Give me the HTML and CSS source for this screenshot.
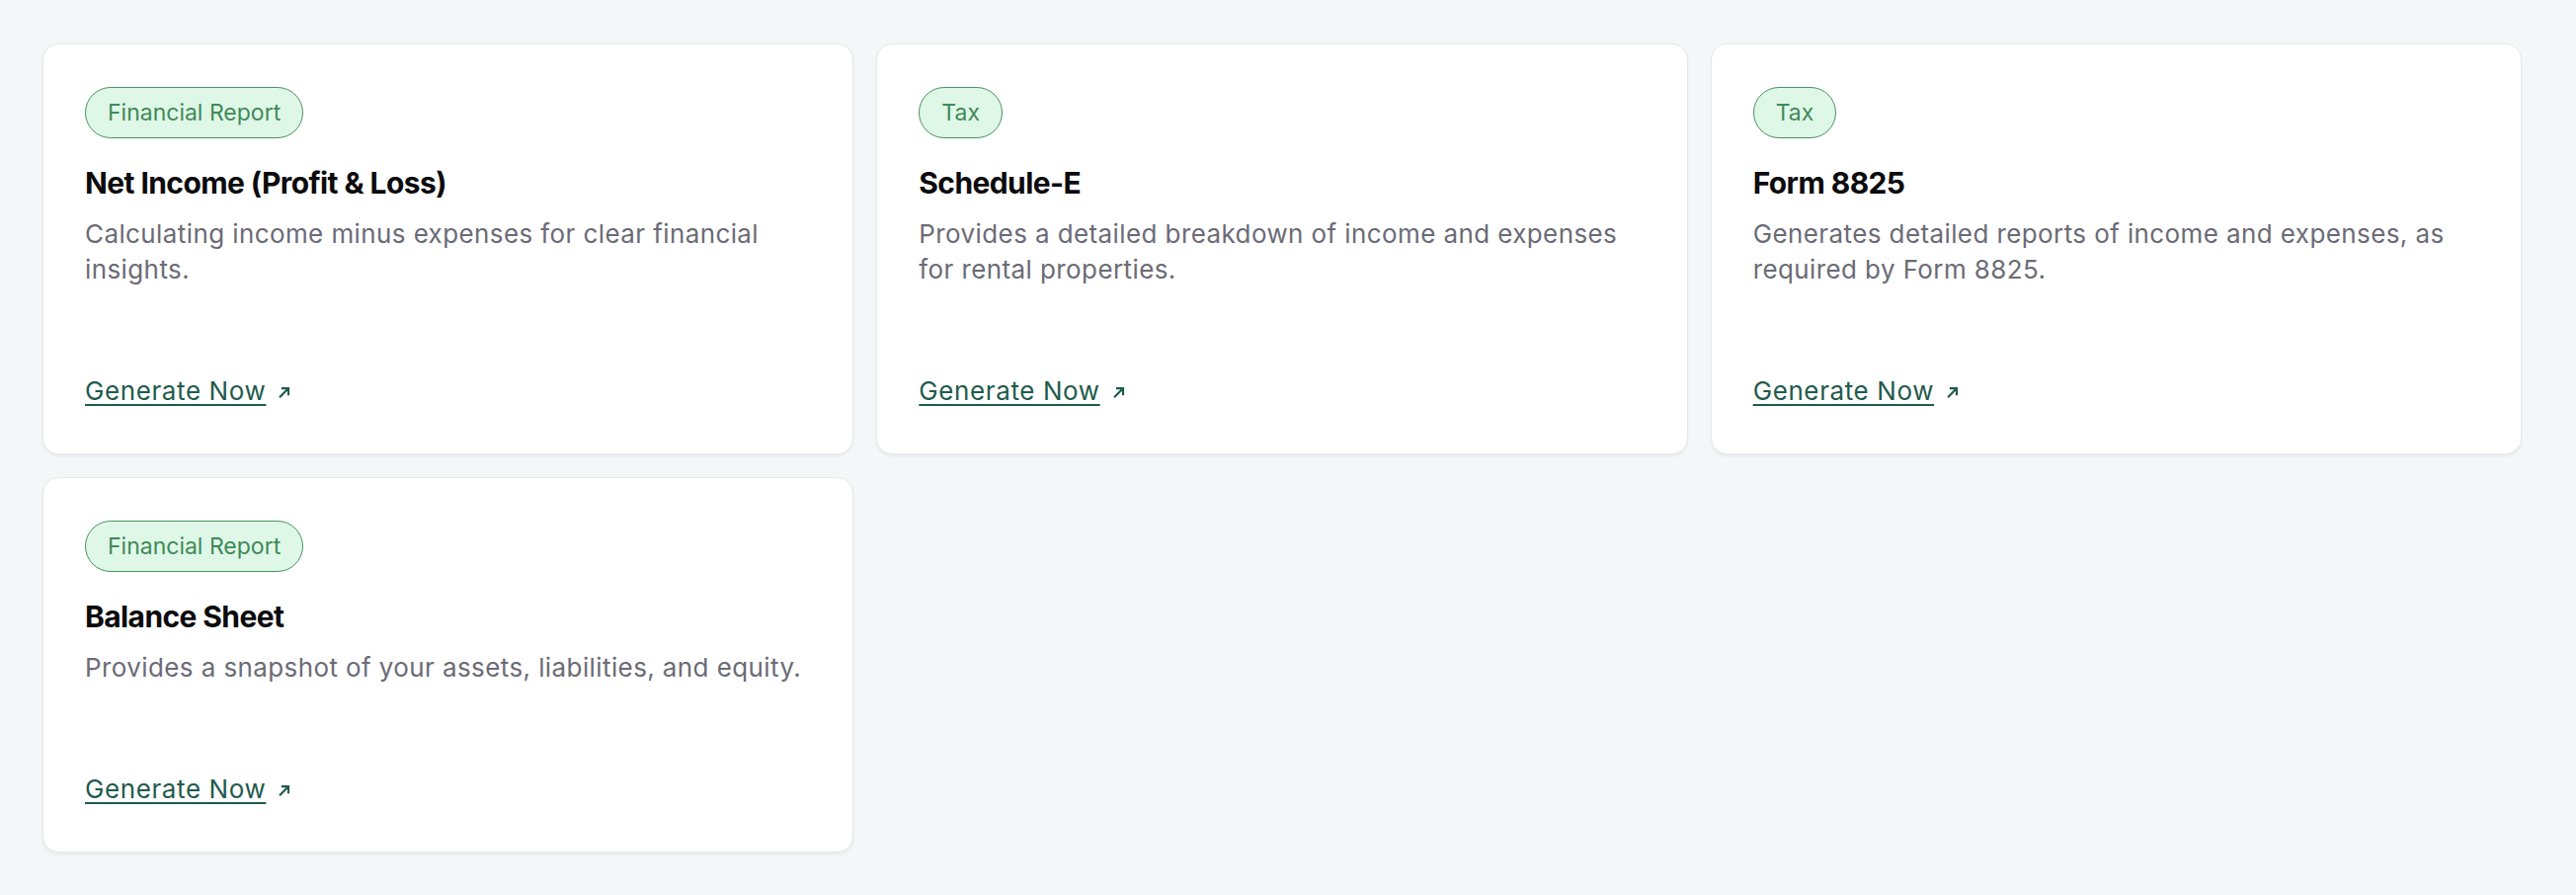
FILE: index.html
```html
<!DOCTYPE html>
<html lang="en">
<head>
<meta charset="utf-8">
<title>Reports</title>
<link rel="stylesheet" href="styles.css">
</head>
<body>
<main class="grid">
  <article class="card">
    <span class="badge">Financial Report</span>
    <h2 class="title">Net Income (Profit &amp; Loss)</h2>
    <p class="desc">Calculating income minus expenses for clear financial insights.</p>
    <a class="link" href="#"><span class="link-text">Generate Now</span><svg class="arrow" viewBox="0 0 14 14" width="13" height="13"><path d="M2.2 12 L11.5 2.7 M4.2 2.3 H11.9 V10" fill="none" stroke="currentColor" stroke-width="2.3"/></svg></a>
  </article>
  <article class="card">
    <span class="badge">Tax</span>
    <h2 class="title">Schedule-E</h2>
    <p class="desc">Provides a detailed breakdown of income and expenses for rental properties.</p>
    <a class="link" href="#"><span class="link-text">Generate Now</span><svg class="arrow" viewBox="0 0 14 14" width="13" height="13"><path d="M2.2 12 L11.5 2.7 M4.2 2.3 H11.9 V10" fill="none" stroke="currentColor" stroke-width="2.3"/></svg></a>
  </article>
  <article class="card">
    <span class="badge">Tax</span>
    <h2 class="title">Form 8825</h2>
    <p class="desc">Generates detailed reports of income and expenses, as required by Form 8825.</p>
    <a class="link" href="#"><span class="link-text">Generate Now</span><svg class="arrow" viewBox="0 0 14 14" width="13" height="13"><path d="M2.2 12 L11.5 2.7 M4.2 2.3 H11.9 V10" fill="none" stroke="currentColor" stroke-width="2.3"/></svg></a>
  </article>
  <article class="card">
    <span class="badge">Financial Report</span>
    <h2 class="title">Balance Sheet</h2>
    <p class="desc">Provides a snapshot of your assets, liabilities, and equity.</p>
    <a class="link" href="#"><span class="link-text">Generate Now</span><svg class="arrow" viewBox="0 0 14 14" width="13" height="13"><path d="M2.2 12 L11.5 2.7 M4.2 2.3 H11.9 V10" fill="none" stroke="currentColor" stroke-width="2.3"/></svg></a>
  </article>
</main>
</body>
</html>
```
FILE: styles.css
```css
* { box-sizing: border-box; }
html, body { margin: 0; padding: 0; }
body {
  background: #f5f6f8;
  font-family: Inter, "Noto Sans", sans-serif;
  min-height: 906px;
}
.grid {
  display: grid;
  grid-template-columns: repeat(3, 1fr);
  gap: 23px;
  padding: 44px 55px 44px 43px;
  align-items: start;
}
.card {
  background: #ffffff;
  border: 1px solid #e6e7eb;
  border-radius: 16px;
  box-shadow: 0 2px 3px rgba(16, 24, 40, 0.05);
  padding: 43px 42px 45px;
  display: flex;
  flex-direction: column;
  align-items: flex-start;
}
.badge {
  display: inline-block;
  font-size: 23px;
  line-height: 32px;
  padding: 9px 22px;
  color: #3f8a58;
  background: #dff7e7;
  border: 1px solid #4b9262;
  border-radius: 999px;
}
.title {
  margin: 25px 0 0;
  font-size: 30px;
  line-height: 40px;
  font-weight: 700;
  color: #0b0b0c;
  letter-spacing: -0.6px;
}
.desc {
  margin: 14px 0 0;
  font-size: 26px;
  line-height: 36px;
  color: #6b6b76;
  letter-spacing: 0.4px;
}
.link {
  margin-top: 87px;
  display: inline-flex;
  align-items: center;
  gap: 12px;
  color: #1f5b4d;
  font-size: 26px;
  line-height: 36px;
  letter-spacing: 0.6px;
  text-decoration: none;
}
.link-text {
  text-decoration: underline;
  text-decoration-thickness: 2px;
  text-underline-offset: 4px;
}
.arrow { width: 13px; height: 13px; margin-top: 3px; }
```
